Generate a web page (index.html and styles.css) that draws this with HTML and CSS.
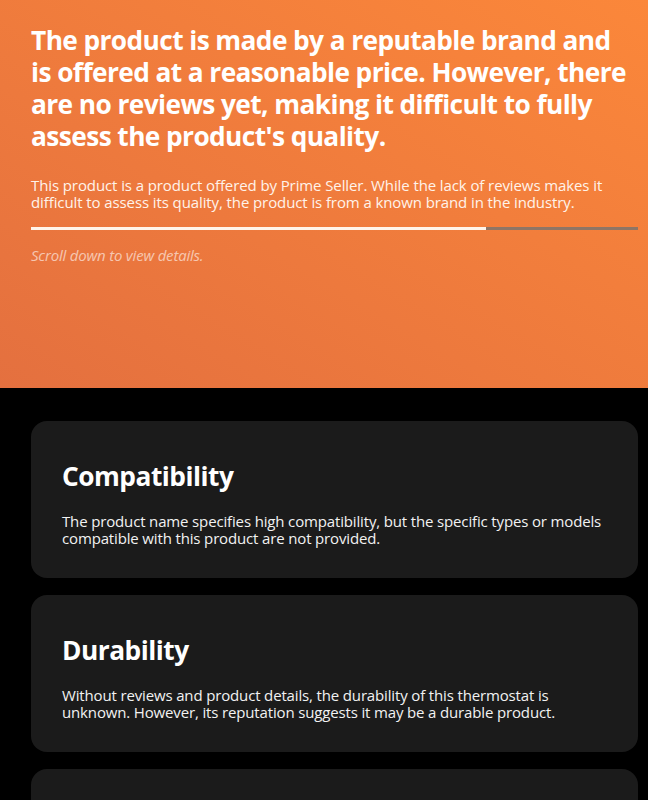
FILE: index.html
```html
<!DOCTYPE html>
<html lang="en">
<head>
<meta charset="utf-8">
<link rel="stylesheet" href="styles.css">
</head>
<body>
<header class="hero">
  <div class="wrap">
    <h1 class="hero-title">The product is made by a reputable brand and is offered at a reasonable price. However, there are no reviews yet, making it difficult to fully assess the product's quality.</h1>
    <p class="hero-text">This product is a product offered by Prime Seller. While the lack of reviews makes it difficult to assess its quality, the product is from a known brand in the industry.</p>
    <div class="progress"><div class="progress-fill" style="width:75%"></div></div>
    <p class="hint">Scroll down to view details.</p>
  </div>
</header>
<main class="details">
  <div class="wrap cards">
    <section class="card">
      <h2 class="card-title">Compatibility</h2>
      <p class="card-text">The product name specifies high compatibility, but the specific types or models compatible with this product are not provided.</p>
    </section>
    <section class="card">
      <h2 class="card-title">Durability</h2>
      <p class="card-text">Without reviews and product details, the durability of this thermostat is unknown. However, its reputation suggests it may be a durable product.</p>
    </section>
    <section class="card">
      <h2 class="card-title">Value</h2>
      <p class="card-text">The product is offered at a reasonable price for a known brand.</p>
    </section>
  </div>
</main>
</body>
</html>
```
FILE: styles.css
```css
* { box-sizing: border-box; }
html, body { margin: 0; padding: 0; background: #000; }
body { font-family: "Open Sans", "Noto Sans", sans-serif; color: #fff; }
.wrap { padding: 0 10px 0 31px; }
.hero {
  height: 388px;
  background: linear-gradient(to top right, #e4703f 0%, #fb873a 100%);
  padding-top: 24px;
}
.hero-title {
  margin: 0;
  padding-right: 12px;
  font-size: 26.3px;
  line-height: 32px;
  font-weight: 700;
  letter-spacing: -0.6px;
}
.hero-text {
  margin: 25px 0 0;
  font-size: 15px;
  line-height: 17px;
  letter-spacing: -0.1px;
  color: #fff3ea;
}
.progress {
  margin-top: 16px;
  height: 3px;
  background: #8f7565;
}
.progress-fill { height: 100%; background: #fff4ea; }
.hint {
  margin: 15px 0 0;
  font-size: 15px;
  font-style: italic;
  letter-spacing: -0.2px;
  color: rgba(255,255,255,0.6);
}
.details { padding-top: 33px; }
.cards { display: flex; flex-direction: column; gap: 17px; }
.card {
  background: #1b1b1b;
  border-radius: 16px;
  padding: 38px 31px 31px;
}
.card-title {
  margin: 0;
  font-size: 26.3px;
  line-height: 34px;
  font-weight: 700;
  letter-spacing: -0.5px;
}
.card-text {
  margin: 20px 0 0;
  font-size: 15px;
  line-height: 17px;
  letter-spacing: -0.15px;
  color: #f2f2f2;
}
```
